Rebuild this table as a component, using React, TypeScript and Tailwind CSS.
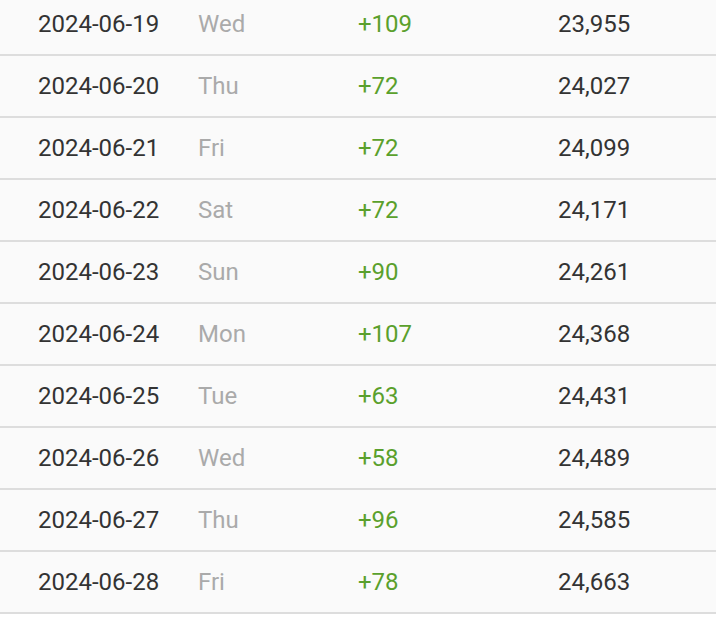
import React from "react";

const rows = [
  ["2024-06-19", "Wed", "+109", "23,955"],
  ["2024-06-20", "Thu", "+72", "24,027"],
  ["2024-06-21", "Fri", "+72", "24,099"],
  ["2024-06-22", "Sat", "+72", "24,171"],
  ["2024-06-23", "Sun", "+90", "24,261"],
  ["2024-06-24", "Mon", "+107", "24,368"],
  ["2024-06-25", "Tue", "+63", "24,431"],
  ["2024-06-26", "Wed", "+58", "24,489"],
  ["2024-06-27", "Thu", "+96", "24,585"],
  ["2024-06-28", "Fri", "+78", "24,663"],
];

export default function App() {
  return (
    <div
      className="w-[716px] h-[636px] overflow-hidden bg-white"
      style={{ fontFamily: "Roboto, 'Liberation Sans', sans-serif" }}
    >
      <div className="mt-[-6px]">
        {rows.map((r) => (
          <div
            key={r[0]}
            className="grid grid-cols-[160px_160px_200px_1fr] items-center h-[62px] pl-[38px] bg-[#fafafa] border-b-2 border-[#dddddd] text-[24px]"
          >
            <span className="text-[#333333]">{r[0]}</span>
            <span className="text-[#aaaaaa]">{r[1]}</span>
            <span className="text-[#5aa02c]">{r[2]}</span>
            <span className="text-[#333333]">{r[3]}</span>
          </div>
        ))}
      </div>
    </div>
  );
}
